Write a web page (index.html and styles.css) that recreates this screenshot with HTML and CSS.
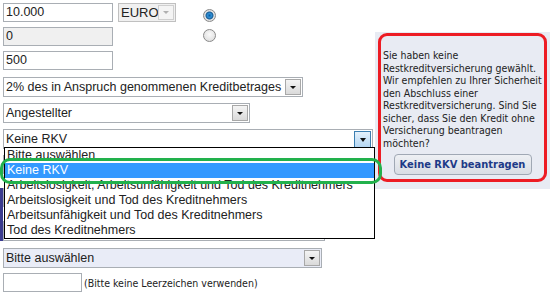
FILE: index.html
```html
<!DOCTYPE html>
<html lang="de">
<head>
  <meta charset="UTF-8" />
  <meta name="viewport" content="width=device-width, initial-scale=1.0"/>
  <title>Kreditantrag</title>
  <link rel="stylesheet" href="styles.css">
</head>
<body>
  <div class="page">
    <div class="form">
      <div class="top">
        <div class="amounts">
          <div class="field amount">10.000</div>
          <div class="field amount readonly">0</div>
          <div class="field amount">500</div>
        </div>
        <div class="select currency disabled">EURO<span class="arrow"></span></div>
        <div class="radios">
          <span class="radio checked"></span>
          <span class="radio"></span>
        </div>
      </div>
      <div class="row">
        <div class="select fee">2% des in Anspruch genommenen Kreditbetrages<span class="arrow"></span></div>
      </div>
      <div class="row">
        <div class="select job">Angestellter<span class="arrow"></span></div>
      </div>
      <div class="row">
        <div class="select insurance open">Keine RKV<span class="arrow"></span></div>
      </div>

      <!-- rows hidden behind the open list -->
      <div class="hidden-rows">
        <div class="field wide"></div>
        <div class="group">
          <div class="field wide"></div>
          <div class="select under">&nbsp;<span class="arrow"></span></div>
        </div>
      </div>

      <div class="row purpose-row">
        <div class="select purpose">Bitte auswählen<span class="arrow"></span></div>
      </div>
      <div class="row">
        <div class="field short"></div>
        <span class="hint">(Bitte keine Leerzeichen verwenden)</span>
      </div>

      <ul class="options">
        <li>Bitte auswählen</li>
        <li class="selected">Keine RKV</li>
        <li>Arbeitslosigkeit, Arbeitsunfähigkeit und Tod des Kreditnehmers</li>
        <li>Arbeitslosigkeit und Tod des Kreditnehmers</li>
        <li>Arbeitsunfähigkeit und Tod des Kreditnehmers</li>
        <li>Tod des Kreditnehmers</li>
      </ul>
      <div class="mark-green"></div>
    </div>

    <div class="panel">
      <div class="notice">
        <p>Sie haben keine Restkreditversicherung gewählt. Wir empfehlen zu Ihrer Sicherheit den Abschluss einer Restkreditversicherung. Sind Sie sicher, dass Sie den Kredit ohne Versicherung beantragen möchten?</p>
        <button class="no-rkv">Keine RKV beantragen</button>
      </div>
    </div>
  </div>
</body>
</html>
```

FILE: styles.css
```css
body {
  margin: 0;
  background: #fff;
  font-family: "Liberation Sans", Arial, sans-serif;
  font-size: 12.5px;
  color: #222;
}

.page {
  display: flex;
  align-items: flex-start;
}

.form {
  position: relative;
  width: 372px;
  padding: 3px 0 0 3px;
}

.top {
  display: flex;
  align-items: flex-start;
  margin-bottom: 7px;
}

.amounts {
  display: flex;
  flex-direction: column;
  gap: 5px;
}

.row {
  display: flex;
  align-items: center;
  margin-bottom: 6px;
}

.purpose-row {
  margin-bottom: 5px;
}

.field,
.select {
  position: relative;
  box-sizing: border-box;
  height: 19px;
  line-height: 17px;
  padding-left: 2px;
  border: 1px solid #a9aeb4;
  background: #fff;
  white-space: nowrap;
}

.amount {
  width: 110px;
}

.readonly {
  background: #f0f0f0;
}

.short {
  width: 79px;
}

.select {
  height: 20px;
  line-height: 18px;
}

.arrow {
  position: absolute;
  top: 1px;
  right: 1px;
  box-sizing: border-box;
  width: 16px;
  height: 16px;
  border: 1px solid #a8a8a8;
  background: linear-gradient(#f4f4f4, #dadada);
}

.arrow::after {
  content: "";
  position: absolute;
  left: 4px;
  top: 6px;
  border-left: 3px solid transparent;
  border-right: 3px solid transparent;
  border-top: 3px solid #111;
}

.currency {
  width: 58px;
  height: 19px;
  margin-left: 5px;
  background: #f0f0f0;
  border-color: #c0c0c0;
  line-height: 17px;
  font-size: 13px;
}

.disabled .arrow {
  height: 15px;
  border-color: #cfcfcf;
  background: #f4f4f4;
}

.disabled .arrow::after {
  top: 5px;
  border-top-color: #b0b0b0;
}

.radios {
  display: flex;
  flex-direction: column;
  gap: 7px;
  margin: 6px 0 0 27px;
}

.radio {
  box-sizing: border-box;
  width: 13px;
  height: 13px;
  border-radius: 50%;
  border: 1px solid #8a8a8a;
  background: radial-gradient(circle at 50% 40%, #fafafa, #d8d8d8);
}

.checked {
  background: radial-gradient(circle, #0b5fa3 0, #2f8fd6 2px, #1b5f96 3.5px, #e8e8e8 4.5px, #d4d4d4 6px);
}

.fee {
  width: 300px;
}

.job {
  width: 247px;
}

.insurance {
  width: 370px;
}

.open .arrow {
  width: 17px;
  height: 17px;
  border-color: #3c7fb1;
  background: linear-gradient(#e5f1fb, #b5d7f3);
}

.open .arrow::after {
  left: 5px;
  top: 6px;
  border-left-width: 3.5px;
  border-right-width: 3.5px;
  border-top-width: 4px;
}

.hidden-rows {
  margin-bottom: 7px;
}

.wide {
  width: 322px;
  margin-bottom: 14px;
}

.group {
  margin-left: -3px;
  border-left: 3px solid #3b3c8f;
}

.under {
  width: 322px;
}

.purpose {
  width: 319px;
  background: #e9ecf7;
}

.hint {
  margin-left: 2px;
  font-family: "DejaVu Sans Condensed", "DejaVu Sans", sans-serif;
  font-stretch: condensed;
  font-size: 10.5px;
  color: #222;
}

.options {
  position: absolute;
  left: 4px;
  top: 147px;
  width: 371px;
  box-sizing: border-box;
  margin: 0;
  padding: 0;
  list-style: none;
  border: 1px solid #000;
  background: #fff;
}

.options li {
  height: 15px;
  line-height: 15px;
  padding-left: 2px;
  white-space: nowrap;
}

.options .selected {
  background: #3399ff;
  color: #fff;
}

.mark-green {
  position: absolute;
  left: 0;
  top: 158px;
  width: 382px;
  height: 26px;
  box-sizing: border-box;
  border: 3px solid #22b14c;
  border-radius: 10px;
}

.panel {
  box-sizing: border-box;
  width: 175px;
  height: 157px;
  margin-top: 32px;
  padding: 1px 3px 0;
  background: #e8ebf3;
}

.notice {
  box-sizing: border-box;
  height: 149px;
  padding: 13px 2px 0;
  border: 3px solid #ed1c24;
  border-radius: 9px;
  text-align: center;
}

.notice p {
  margin: 0 0 5px;
  text-align: left;
  font-family: "DejaVu Sans Condensed", "DejaVu Sans", sans-serif;
  font-stretch: condensed;
  font-size: 10.5px;
  line-height: 12.5px;
  color: #222;
}

.no-rkv {
  width: 138px;
  height: 21px;
  padding: 0;
  border: 1px solid #a0a8b4;
  border-radius: 4px;
  background: linear-gradient(#eef0f4, #d9dde4);
  font-family: "DejaVu Sans Condensed", "DejaVu Sans", sans-serif;
  font-stretch: condensed;
  font-size: 11px;
  font-weight: bold;
  color: #1d3a88;
}
```
